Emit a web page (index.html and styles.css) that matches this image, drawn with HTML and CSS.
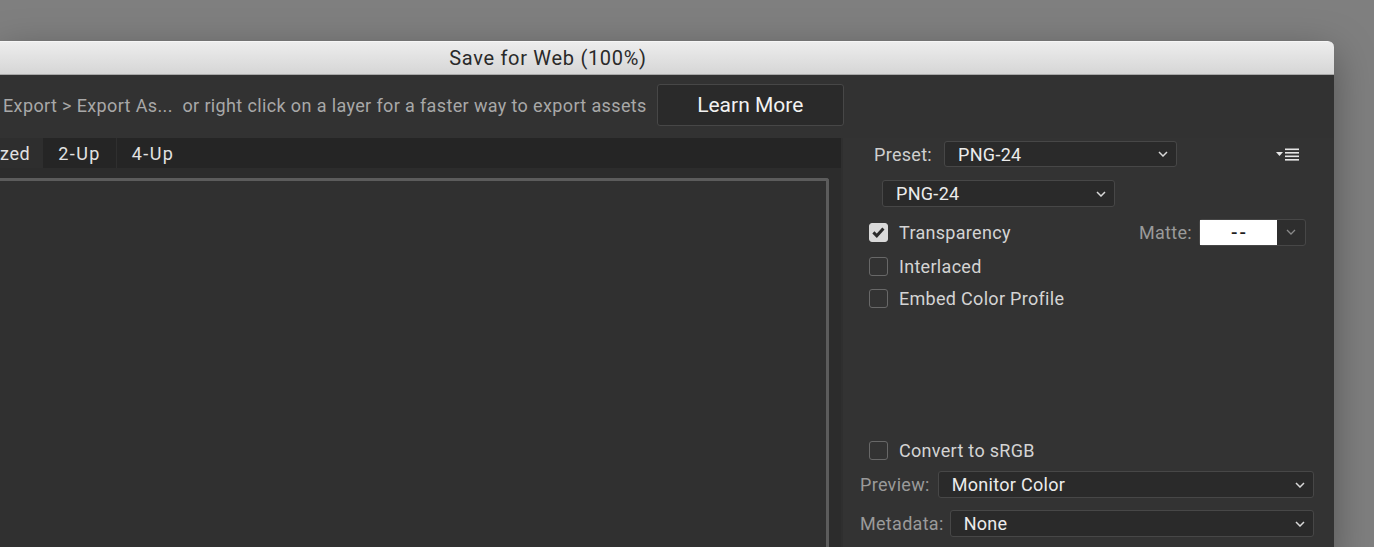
FILE: index.html
```html
<!DOCTYPE html>
<html>
<head>
<meta charset="utf-8">
<link rel="stylesheet" href="styles.css">
</head>
<body>
<div class="desk">
  <div class="window">
    <div class="titlebar"><span class="title">Save for Web (100%)</span></div>
    <div class="notice">
      <span class="notice-text">Export &gt; Export As...&nbsp; or right click on a layer for a faster way to export assets</span>
      <button class="learn">Learn More</button>
    </div>
    <div class="main">
      <div class="viewer">
        <div class="tabs">
          <div class="tab tab-active">zed</div>
          <div class="tab tab-sep">2-Up</div>
          <div class="tab">4-Up</div>
        </div>
        <div class="canvas-area"><div class="canvas"></div></div>
      </div>
      <div class="panel">
        <div class="row preset-row">
          <span class="label">Preset:</span>
          <div class="select select-preset"><span>PNG-24</span><svg class="chev" width="10" height="6" viewBox="0 0 10 6"><path d="M1 1l4 4 4-4" fill="none" stroke="#d8d8d8" stroke-width="1.5"/></svg></div>
          <svg class="menu-icon" width="24" height="13" viewBox="0 0 24 13"><path d="M0 4h7l-3.5 4z" fill="#e6e6e6"/><rect x="9" y="0.5" width="14" height="1.6" fill="#e6e6e6"/><rect x="9" y="4" width="14" height="1.6" fill="#e6e6e6"/><rect x="9" y="7.5" width="14" height="1.6" fill="#e6e6e6"/><rect x="9" y="11" width="14" height="1.6" fill="#e6e6e6"/></svg>
        </div>
        <div class="row format-row">
          <div class="select select-format"><span>PNG-24</span><svg class="chev" width="10" height="6" viewBox="0 0 10 6"><path d="M1 1l4 4 4-4" fill="none" stroke="#d8d8d8" stroke-width="1.5"/></svg></div>
        </div>
        <div class="row check-row check-first">
          <span class="box box-checked"><svg width="19" height="19" viewBox="0 0 19 19"><path d="M4.4 9.4l3.4 3.4 6.6-7.2" fill="none" stroke="#2a2a2a" stroke-width="3"/></svg></span>
          <span class="check-label">Transparency</span>
          <span class="dim-label matte-label">Matte:</span>
          <div class="matte"><span class="matte-swatch">--</span><span class="matte-drop"><svg width="10" height="6" viewBox="0 0 10 6"><path d="M1 1l4 4 4-4" fill="none" stroke="#8a8a8a" stroke-width="1.3"/></svg></span></div>
        </div>
        <div class="row check-row check-second">
          <span class="box"></span>
          <span class="check-label">Interlaced</span>
        </div>
        <div class="row check-row">
          <span class="box"></span>
          <span class="check-label">Embed Color Profile</span>
        </div>
        <div class="row check-row check-convert">
          <span class="box"></span>
          <span class="check-label">Convert to sRGB</span>
        </div>
        <div class="row field-row field-preview">
          <span class="dim-label">Preview:</span>
          <div class="select select-wide"><span>Monitor Color</span><svg class="chev" width="10" height="6" viewBox="0 0 10 6"><path d="M1 1l4 4 4-4" fill="none" stroke="#d8d8d8" stroke-width="1.5"/></svg></div>
        </div>
        <div class="row field-row field-meta">
          <span class="dim-label">Metadata:</span>
          <div class="select select-wide"><span>None</span><svg class="chev" width="10" height="6" viewBox="0 0 10 6"><path d="M1 1l4 4 4-4" fill="none" stroke="#d8d8d8" stroke-width="1.5"/></svg></div>
        </div>
      </div>
    </div>
  </div>
</div>
</body>
</html>
```
FILE: styles.css
```css
* { box-sizing: border-box; }
html, body {
  margin: 0;
  padding: 0;
}
body {
  width: 1374px;
  height: 547px;
  overflow: hidden;
  background: #7f7f7f;
  font-family: Roboto, "Liberation Sans", sans-serif;
}
.desk {
  padding-top: 41px;
}
.window {
  width: 1334px;
  height: 520px;
  background: #323232;
  border-top-right-radius: 6px;
  box-shadow: 0 12px 40px rgba(0, 0, 0, 0.34);
  display: flex;
  flex-direction: column;
}
.titlebar {
  height: 34px;
  flex: 0 0 34px;
  background: linear-gradient(#ededed, #d6d6d6);
  border-top: 1px solid #f6f6f6;
  border-bottom: 1px solid #a8a8a8;
  border-top-right-radius: 6px;
  display: flex;
  align-items: center;
  justify-content: center;
  padding-right: 238px;
}
.title {
  font-size: 20px;
  color: #2a2a2a;
  letter-spacing: 0.7px;
}
.notice {
  height: 63px;
  flex: 0 0 63px;
  display: flex;
  align-items: center;
  padding: 0 0 3px 3px;
}
.notice-text {
  font-size: 18px;
  color: #a8a8a8;
  letter-spacing: 0.37px;
  white-space: nowrap;
}
.learn {
  margin-left: 10px;
  width: 187px;
  height: 42px;
  background: #2a2a2a;
  border: 1px solid #474747;
  border-radius: 3px;
  color: #f2f2f2;
  font-family: Roboto, "Liberation Sans", sans-serif;
  font-size: 21px;
  padding: 0;
}
.main {
  flex: 1;
  display: flex;
  min-height: 0;
}
.viewer {
  width: 841px;
  flex: 0 0 841px;
  display: flex;
  flex-direction: column;
  background: #2b2b2b;
}
.tabs {
  height: 30px;
  flex: 0 0 30px;
  background: #252525;
  display: flex;
}
.tab {
  font-size: 18px;
  color: #e2e2e2;
  display: flex;
  align-items: center;
  padding: 0 15px;
  letter-spacing: 1.4px;
  white-space: nowrap;
}
.tab-active {
  background: #2e2e2e;
  padding: 0 13px 0 0;
  letter-spacing: 0.6px;
}
.tab-sep {
  border-right: 1px solid #2f2f2f;
}
.canvas-area {
  flex: 1;
  padding: 10px 12px 0 0;
  background: #2c2c2c;
}
.canvas {
  height: 100%;
  background: #303030;
  border-top: 3px solid #5c5c5c;
  border-right: 3px solid #5c5c5c;
  border-top-right-radius: 3px;
}
.panel {
  flex: 1;
  background: #333333;
  border-left: 2px solid #2f2f2f;
  padding: 3px 20px 0 17px;
  display: flex;
  flex-direction: column;
}
.row {
  display: flex;
  align-items: center;
}
.label {
  font-size: 18px;
  color: #cfcfcf;
  letter-spacing: 0.3px;
}
.dim-label {
  font-size: 18px;
  color: #9a9a9a;
  letter-spacing: 0.3px;
}
.select {
  height: 27px;
  background: #2a2a2a;
  border: 1px solid #474747;
  border-radius: 3px;
  display: flex;
  align-items: center;
  justify-content: space-between;
  padding: 0 8px 0 13px;
  font-size: 18px;
  color: #ececec;
  letter-spacing: 0.3px;
}
.chev {
  flex: 0 0 auto;
}
.preset-row {
  margin-left: 14px;
}
.preset-row .label {
  margin-right: 12px;
}
.select-preset {
  width: 233px;
  height: 26px;
}
.menu-icon {
  margin-left: auto;
  margin-right: 14px;
}
.format-row {
  margin-left: 22px;
  margin-top: 13px;
}
.select-format {
  width: 233px;
}
.check-row {
  height: 32px;
  margin-left: 9px;
}
.check-first {
  margin-top: 10px;
  height: 30px;
}
.check-second {
  margin-top: 3px;
}
.box {
  width: 19px;
  height: 19px;
  border: 1.5px solid #686868;
  border-radius: 3px;
  flex: 0 0 19px;
  display: flex;
  align-items: center;
  justify-content: center;
}
.box-checked {
  background: #d9d9d9;
  border-color: #d9d9d9;
}
.box-checked svg {
  flex: 0 0 auto;
}
.check-label {
  margin-left: 11px;
  font-size: 18px;
  color: #d4d4d4;
  letter-spacing: 0.3px;
}
.matte-label {
  margin-left: auto;
}
.matte {
  margin-left: 7px;
  margin-right: 8px;
  width: 107px;
  height: 27px;
  border: 1px solid #474747;
  border-radius: 3px;
  display: flex;
  background: #2e2e2e;
}
.matte-swatch {
  width: 77px;
  background: #ffffff;
  color: #1e1e1e;
  font-size: 19px;
  font-weight: 500;
  display: flex;
  align-items: center;
  justify-content: center;
  letter-spacing: 2px;
  padding-left: 2px;
}
.matte-drop {
  flex: 1;
  display: flex;
  align-items: center;
  justify-content: center;
}
.check-convert {
  margin-top: 120px;
}
.field-row .dim-label {
  margin-right: 8px;
}
.field-meta .dim-label {
  margin-right: 6px;
}
.select-wide {
  flex: 1;
}
.field-preview {
  margin-top: 5px;
}
.field-meta {
  margin-top: 12px;
}
```
